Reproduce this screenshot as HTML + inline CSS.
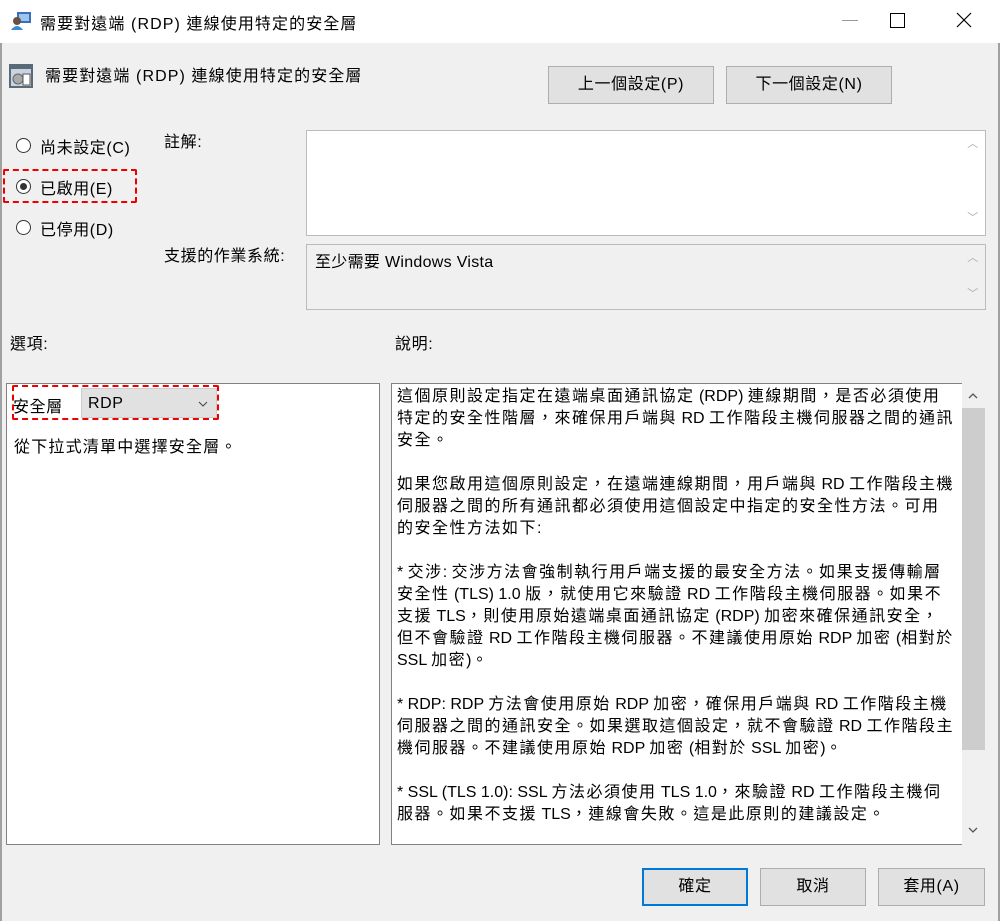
<!DOCTYPE html>
<html><head><meta charset="utf-8"><style>
body{margin:0;width:1000px;height:921px;background:#f0f0f0;font-family:"Liberation Sans","Noto Sans CJK TC",sans-serif;font-size:16px;color:#000;position:relative;overflow:hidden;letter-spacing:0.6px}
.a{position:absolute;white-space:nowrap}
.btn{position:absolute;background:#e1e1e1;border:1px solid #adadad;box-sizing:border-box;text-align:center;font-size:16px}
.box{position:absolute;background:#fff;border:1px solid #828282;box-sizing:border-box}
.radio{position:absolute;width:15px;height:15px;border:1px solid #333;border-radius:50%;box-sizing:border-box;background:#fff}
.dash{position:absolute;border:2px dashed #e00;box-sizing:border-box;border-radius:2px}
.desc{position:absolute;left:397px;top:386px;line-height:22px;font-size:16px;white-space:pre;color:#000;letter-spacing:1.5px}
.desc i{font-style:normal;letter-spacing:0}
</style></head><body>
<div class="a" style="left:0;top:0;width:1000px;height:43px;background:#fff"></div>
<div class="a" style="left:0;top:43px;width:2px;height:878px;background:#a0a0a0"></div>
<div class="a" style="left:998px;top:43px;width:2px;height:878px;background:#a0a0a0"></div>
<svg class="a" style="left:11px;top:11px" width="22" height="20"><rect x="6" y="1" width="14" height="11" fill="#3a70b8"/><rect x="8" y="3" width="10" height="7" fill="#9cc6ee"/><circle cx="6" cy="10" r="4" fill="#6a5040"/><path d="M0 19 Q6 11 12 19Z" fill="#3a8ad0"/></svg>
<div class="a" style="left:40px;top:10px;letter-spacing:1.1px">需要對遠端 (RDP) 連線使用特定的安全層</div>
<div class="a" style="left:842px;top:20px;width:16px;height:1px;background:#999"></div>
<div class="a" style="left:890px;top:13px;width:13px;height:13px;border:1px solid #000"></div>
<svg class="a" style="left:956px;top:12px" width="16" height="16"><path d="M1 1L15 15M15 1L1 15" stroke="#000" stroke-width="1.2"/></svg>

<svg class="a" style="left:8px;top:63px" width="26" height="26"><rect x="1" y="1" width="24" height="24" fill="#5a6a78"/><rect x="3" y="6" width="20" height="17" fill="#c8d4e0"/><circle cx="10" cy="16" r="5" fill="#aaa" stroke="#666"/><rect x="15" y="11" width="7" height="11" fill="#fff" stroke="#555"/></svg>
<div class="a" style="left:45px;top:62px;letter-spacing:1.1px">需要對遠端 (RDP) 連線使用特定的安全層</div>
<div class="btn" style="left:548px;top:66px;width:166px;height:38px;line-height:36px">上一個設定(P)</div>
<div class="btn" style="left:726px;top:66px;width:166px;height:38px;line-height:36px">下一個設定(N)</div>

<div class="radio" style="left:16px;top:138px"></div>
<div class="a" style="left:40px;top:134px">尚未設定(C)</div>
<div class="radio" style="left:16px;top:179px"></div><div class="a" style="left:20px;top:183px;width:7px;height:7px;border-radius:50%;background:#333"></div>
<div class="a" style="left:40px;top:175px">已啟用(E)</div>
<div class="dash" style="left:3px;top:169px;width:134px;height:34px"></div>
<div class="radio" style="left:16px;top:220px"></div>
<div class="a" style="left:40px;top:216px">已停用(D)</div>

<div class="a" style="left:164px;top:128px">註解:</div>
<div class="box" style="left:306px;top:130px;width:680px;height:106px;border-color:#bbb"></div>
<div class="a" style="left:961px;top:131px;width:24px;height:104px;background:#fff;color:#aaa;font-size:11px;text-align:center"><div style="margin-top:4px">︿</div><div style="margin-top:58px">﹀</div></div>
<div class="a" style="left:164px;top:242px">支援的作業系統:</div>
<div class="box" style="left:306px;top:244px;width:680px;height:66px;background:#f0f0f0;border-color:#bbb"></div>
<div class="a" style="left:315px;top:248px;letter-spacing:0.3px">至少需要 Windows Vista</div>
<div class="a" style="left:961px;top:245px;width:24px;height:64px;color:#aaa;font-size:11px;text-align:center"><div style="margin-top:4px">︿</div><div style="margin-top:20px">﹀</div></div>

<div class="a" style="left:10px;top:330px">選項:</div>
<div class="a" style="left:395px;top:330px">說明:</div>

<div class="box" style="left:6px;top:383px;width:374px;height:462px"></div>
<div class="a" style="left:13px;top:393px">安全層</div>
<div class="a" style="left:81px;top:388px;width:136px;height:30px;background:#e1e1e1;border:1px solid #ccc;box-sizing:border-box"></div>
<div class="a" style="left:88px;top:395px">RDP</div>
<svg class="a" style="left:198px;top:401px" width="10" height="6"><path d="M1 1L5 5L9 1" stroke="#444" fill="none"/></svg>
<div class="dash" style="left:12px;top:385px;width:207px;height:35px"></div>
<div class="a" style="left:14px;top:433px;letter-spacing:1.2px">從下拉式清單中選擇安全層。</div>

<div class="box" style="left:391px;top:383px;width:572px;height:462px"></div>
<div class="a" style="left:962px;top:383px;width:24px;height:462px;background:#f0f0f0"></div>
<div class="a" style="left:962px;top:408px;width:23px;height:342px;background:#cdcdcd"></div>
<svg class="a" style="left:967px;top:392px" width="12" height="8"><path d="M2 6L6 2L10 6" stroke="#555" fill="none" stroke-width="1.3"/></svg>
<svg class="a" style="left:967px;top:826px" width="12" height="8"><path d="M2 2L6 6L10 2" stroke="#555" fill="none" stroke-width="1.3"/></svg>
<div class="desc">這個原則設定指定在遠端桌面通訊協定<i> (RDP) </i>連線期間，是否必須使用
特定的安全性階層，來確保用戶端與<i> RD </i>工作階段主機伺服器之間的通訊
安全。

如果您啟用這個原則設定，在遠端連線期間，用戶端與<i> RD </i>工作階段主機
伺服器之間的所有通訊都必須使用這個設定中指定的安全性方法。可用
的安全性方法如下<i>:</i>

<i>* </i>交涉<i>: </i>交涉方法會強制執行用戶端支援的最安全方法。如果支援傳輸層
安全性<i> (TLS) 1.0 </i>版，就使用它來驗證<i> RD </i>工作階段主機伺服器。如果不
支援<i> TLS</i>，則使用原始遠端桌面通訊協定<i> (RDP) </i>加密來確保通訊安全，
但不會驗證<i> RD </i>工作階段主機伺服器。不建議使用原始<i> RDP </i>加密<i> (</i>相對於
<i>SSL </i>加密<i>)</i>。

<i>* RDP: RDP </i>方法會使用原始<i> RDP </i>加密，確保用戶端與<i> RD </i>工作階段主機
伺服器之間的通訊安全。如果選取這個設定，就不會驗證<i> RD </i>工作階段主
機伺服器。不建議使用原始<i> RDP </i>加密<i> (</i>相對於<i> SSL </i>加密<i>)</i>。

<i>* SSL (TLS 1.0): SSL </i>方法必須使用<i> TLS 1.0</i>，來驗證<i> RD </i>工作階段主機伺
服器。如果不支援<i> TLS</i>，連線會失敗。這是此原則的建議設定。</div>

<div class="btn" style="left:642px;top:868px;width:106px;height:38px;line-height:34px;border:2px solid #0078d7">確定</div>
<div class="btn" style="left:760px;top:868px;width:106px;height:38px;line-height:36px">取消</div>
<div class="btn" style="left:878px;top:868px;width:107px;height:38px;line-height:36px">套用(A)</div>
</body></html>
